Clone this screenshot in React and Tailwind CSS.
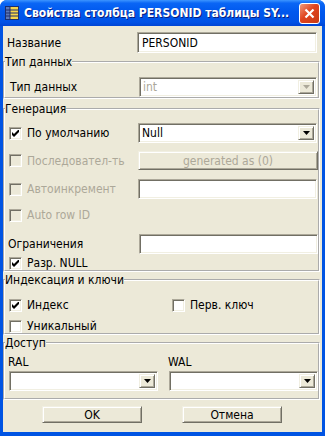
import React from 'react';

const font = { fontFamily: '"DejaVu Sans Condensed", "DejaVu Sans", Tahoma, sans-serif' };

const sunken =
  'border border-t-[#ACA899] border-l-[#ACA899] border-b-white border-r-white shadow-[inset_1px_1px_0_#716F64,inset_-1px_-1px_0_#F1EFE2]';
const raised =
  'border border-t-[#F1EFE2] border-l-[#F1EFE2] border-b-[#716F64] border-r-[#716F64] shadow-[inset_1px_1px_0_#FFFFFF,inset_-1px_-1px_0_#ACA899] bg-[#ECE9D8]';

function Arrow({ disabled }) {
  return (
    <div className={`${raised} w-[16px] h-full flex items-center justify-center`}>
      <svg width="7" height="4" viewBox="0 0 7 4">
        <path d="M0 0h7L3.5 4z" fill={disabled ? '#ACA899' : '#000'} />
      </svg>
    </div>
  );
}

function Combo({ value, disabled, className }) {
  return (
    <div className={`${sunken} bg-white flex items-stretch p-[2px] ${className}`}>
      <div className={`flex-1 flex items-center pl-[1px] text-[12px] ${disabled ? 'text-[#ACA899]' : 'text-black'}`}>
        {value}
      </div>
      <Arrow disabled={disabled} />
    </div>
  );
}

function Check({ checked, disabled, label, className = '' }) {
  return (
    <div className={`flex items-center h-[14px] ${className}`}>
      <div
        className={`w-[13px] h-[13px] flex items-center justify-center ${sunken} ${
          disabled ? 'bg-[#ECE9D8]' : 'bg-white'
        }`}
      >
        {checked && (
          <svg width="7" height="7" viewBox="0 0 7 7">
            <path d="M0 2v3l2 2 5-5V-1L2 4z" fill="#000" />
          </svg>
        )}
      </div>
      <span className={`ml-[5px] text-[12px] ${disabled ? 'text-[#ACA899]' : 'text-black'}`}>{label}</span>
    </div>
  );
}

function Group({ title, children, className = '' }) {
  return (
    <fieldset className={`border-2 [border-style:groove] border-white mr-[2px] ${className}`}>
      <legend className="leading-[14px] text-[12px]">{title}</legend>
      {children}
    </fieldset>
  );
}

function TitleIcon() {
  return (
    <svg width="14" height="14" viewBox="0 0 14 14">
      <rect x="0.5" y="0.5" width="13" height="13" fill="#fff" stroke="#1C2F6E" />
      <rect x="1" y="1" width="4" height="12" fill="#5E79B8" />
      <rect x="5" y="1" width="8" height="12" fill="#F5D54A" />
      <path d="M1 4h12M1 7h12M1 10h12M5 1v12" stroke="#1C2F6E" strokeWidth="1" />
    </svg>
  );
}

export default function App() {
  return (
    <div
      className="w-[325px] h-[436px] flex flex-col bg-[#0054E3] rounded-t-[7px] overflow-hidden text-black"
      style={font}
    >
      <div className="h-[26px] flex items-center bg-[linear-gradient(#3D95FF_0%,#0A66F5_12%,#0058EE_45%,#0052E6_85%,#0044D4_100%)]">
        <div className="ml-[5px]">
          <TitleIcon />
        </div>
        <span className="ml-[5px] text-white font-bold text-[12px] [text-shadow:1px_1px_0_#0A1E7A] whitespace-nowrap">
          Свойства столбца PERSONID таблицы SY...
        </span>
        <div className="ml-auto mr-[5px] w-[21px] h-[21px] rounded-[3px] border border-white bg-[linear-gradient(135deg,#F09A7C,#E0441F_45%,#C83A14)] flex items-center justify-center">
          <svg width="11" height="11" viewBox="0 0 11 11">
            <path d="M1.5 1.5l8 8M9.5 1.5l-8 8" stroke="#fff" strokeWidth="2.2" />
          </svg>
        </div>
      </div>

      <div className="flex-1 mx-[3px] mb-[4px] bg-[#ECE9D8] flex flex-col text-[12px]">
        <div className="mt-[6px] h-[21px] flex items-center">
          <span className="ml-[4px]">Название</span>
          <div className={`${sunken} bg-white ml-auto mr-[5px] w-[180px] h-full flex items-center pl-[4px]`}>
            PERSONID
          </div>
        </div>

        <Group title="Тип данных" className="mt-[2px]">
          <div className="mt-[8px] h-[20px] flex items-center">
            <span className="ml-[5px]">Тип данных</span>
            <Combo value="int" disabled className="ml-auto mr-[1px] w-[178px] h-full" />
          </div>
        </Group>

        <Group title="Генерация" className="mt-[3px]">
          <div className="mt-[7px] h-[20px] flex items-center">
            <Check checked label="По умолчанию" className="ml-[4px]" />
            <Combo value="Null" className="ml-auto mr-[1px] w-[179px] h-full" />
          </div>
          <div className="mt-[8px] h-[19px] flex items-center">
            <Check disabled label="Последовател-ть" className="ml-[4px]" />
            <div className={`${raised} ml-auto w-[180px] h-full flex items-center justify-center text-[#ACA899]`}>
              generated as (0)
            </div>
          </div>
          <div className="mt-[9px] h-[20px] flex items-center">
            <Check disabled label="Автоинкремент" className="ml-[4px]" />
            <div className={`${sunken} bg-white ml-auto mr-[1px] w-[179px] h-full`} />
          </div>
          <div className="mt-[6px] h-[20px] flex items-center">
            <Check disabled label="Auto row ID" className="ml-[4px]" />
          </div>
          <div className="mt-[9px] h-[20px] flex items-center">
            <span className="ml-[3px]">Ограничения</span>
            <div className={`${sunken} bg-white ml-auto mr-[0px] w-[179px] h-full`} />
          </div>
          <div className="mt-[2px] h-[14px] flex items-center">
            <Check checked label="Разр. NULL" className="ml-[4px]" />
          </div>
        </Group>

        <Group title="Индексация и ключи" className="mt-[1px]">
          <div className="mt-[11px] h-[14px] flex items-center">
            <Check checked label="Индекс" className="ml-[4px] w-[162px]" />
            <Check label="Перв. ключ" className="ml-[1px]" />
          </div>
          <div className="mt-[7px] h-[14px] flex items-center">
            <Check label="Уникальный" className="ml-[4px]" />
          </div>
        </Group>

        <Group title="Доступ" className="mt-[1px] pb-[7px]">
          <div className="mt-[5px] h-[14px] flex items-center">
            <span className="ml-[3px] w-[160px]">RAL</span>
            <span>WAL</span>
          </div>
          <div className="mt-[2px] h-[20px] flex items-center">
            <Combo className="ml-[4px] w-[149px] h-full" />
            <Combo className="ml-[11px] w-[149px] h-full" />
          </div>
        </Group>

        <div className="mt-[6px] h-[17px] flex items-center">
          <div className={`${raised} ml-[39px] w-[100px] h-full flex items-center justify-center`}>OK</div>
          <div className={`${raised} ml-[40px] w-[100px] h-full flex items-center justify-center`}>Отмена</div>
        </div>
      </div>
    </div>
  );
}
